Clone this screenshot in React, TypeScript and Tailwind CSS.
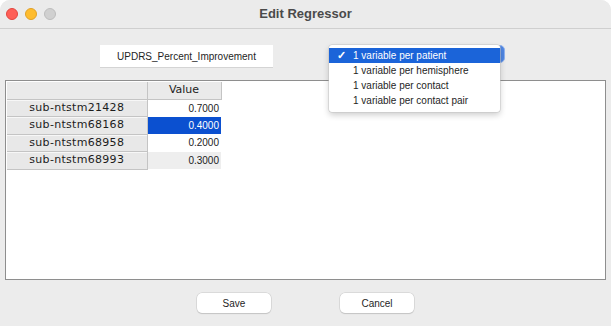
const rows = [
  { name: 'sub-ntstm21428', value: '0.7000' },
  { name: 'sub-ntstm68168', value: '0.4000', selected: true },
  { name: 'sub-ntstm68958', value: '0.2000' },
  { name: 'sub-ntstm68993', value: '0.3000', gray: true },
];

const options = [
  '1 variable per patient',
  '1 variable per hemisphere',
  '1 variable per contact',
  '1 variable per contact pair',
];

export default function App() {
  return (
    <div className="w-[611px] h-[326px] bg-white">
      <div className="w-[611px] h-[326px] bg-[#ececec] rounded-t-[10px] overflow-hidden flex flex-col relative font-['Liberation_Sans',sans-serif]">
        {/* title bar */}
        <div className="h-[29px] shrink-0 bg-[#ebebeb] border-b border-[#cfcfcf] flex items-center relative">
          <div className="flex items-center gap-[7px] pl-[6px]">
            <span className="w-[12px] h-[12px] rounded-full bg-[#fe5f57] border border-[#e2463f]" />
            <span className="w-[12px] h-[12px] rounded-full bg-[#febc2e] border border-[#e0a027]" />
            <span className="w-[12px] h-[12px] rounded-full bg-[#d0d0d0] border border-[#bcbcbc]" />
          </div>
          <div className="absolute inset-0 flex items-center justify-center text-[13px] font-bold text-[#4a4a4a]">
            Edit Regressor
          </div>
        </div>

        {/* top controls */}
        <div className="h-[51px] shrink-0 flex items-start pt-[16px] pl-[100px]">
          <div className="w-[173px] h-[23px] bg-white border-b border-[#d4d4d4] flex items-center justify-center text-[10px] text-[#1e1e1e]">
            UPDRS_Percent_Improvement
          </div>
        </div>

        {/* table panel */}
        <div className="mx-[5px] h-[200px] bg-white border border-[#8e8e8e] p-[1px]">
          <table className="border-collapse font-['DejaVu_Sans',sans-serif] text-[11px] text-[#1c1c1c]">
            <thead>
              <tr className="h-[17px]">
                <th className="w-[140px] p-0 bg-[#eaeaea] border-r border-b border-[#c4c4c4]" />
                <th className="w-[74px] p-0 bg-[#eaeaea] border-r border-b border-[#c4c4c4] font-normal text-center">
                  Value
                </th>
              </tr>
            </thead>
            <tbody>
              {rows.map((r) => (
                <tr key={r.name} className="h-[17px]">
                  <td className="p-0 bg-[#e8e8e8] border-r border-b border-[#c4c4c4] text-center tracking-[0.3px] shadow-[inset_0_1px_0_#f7f7f7]">
                    {r.name}
                  </td>
                  <td
                    className={
                      r.selected
                        ? 'p-0 pr-[2px] text-right text-[10px] font-["Liberation_Sans",sans-serif] bg-[#0b50d0] text-white'
                        : r.gray
                          ? 'p-0 pr-[2px] text-right text-[10px] font-["Liberation_Sans",sans-serif] bg-[#eeeeee]'
                          : 'p-0 pr-[2px] text-right text-[10px] font-["Liberation_Sans",sans-serif] bg-white'
                    }
                  >
                    {r.value}
                  </td>
                </tr>
              ))}
            </tbody>
          </table>
        </div>

        {/* buttons */}
        <div className="flex-1 flex items-start pt-[13px] pl-[197px] gap-[69px]">
          <button className="w-[74px] h-[20px] bg-white rounded-[5px] shadow-[0_0_0_0.5px_#c8c8c8,0_1px_1px_rgba(0,0,0,0.18)] text-[10px] text-[#1e1e1e]">
            Save
          </button>
          <button className="w-[74px] h-[20px] bg-white rounded-[5px] shadow-[0_0_0_0.5px_#c8c8c8,0_1px_1px_rgba(0,0,0,0.18)] text-[10px] text-[#1e1e1e]">
            Cancel
          </button>
        </div>

        {/* popup button edge behind the menu */}
        <div className="absolute left-[490px] top-[45px] w-[15px] h-[18px] rounded-r-[5px] bg-[#4f86e3] border border-[#8fb2ee]" />

        {/* open popup menu */}
        <div className="absolute left-[329px] top-[45px] w-[171px] bg-white rounded-[3px] shadow-[0_0_0_0.5px_#c4c4c4,0_3px_6px_rgba(0,0,0,0.2)] pt-[3px] pb-[4px] text-[10px] text-[#1e1e1e]">
          {options.map((o, i) => (
            <div
              key={o}
              className={
                i === 0
                  ? 'h-[15px] flex items-center bg-[#1b64d9] text-white'
                  : 'h-[15px] flex items-center'
              }
            >
              <span className="w-[24px] pl-[8px] text-[11px] font-bold">{i === 0 ? '✓' : ''}</span>
              <span>{o}</span>
            </div>
          ))}
        </div>
      </div>
    </div>
  );
}
